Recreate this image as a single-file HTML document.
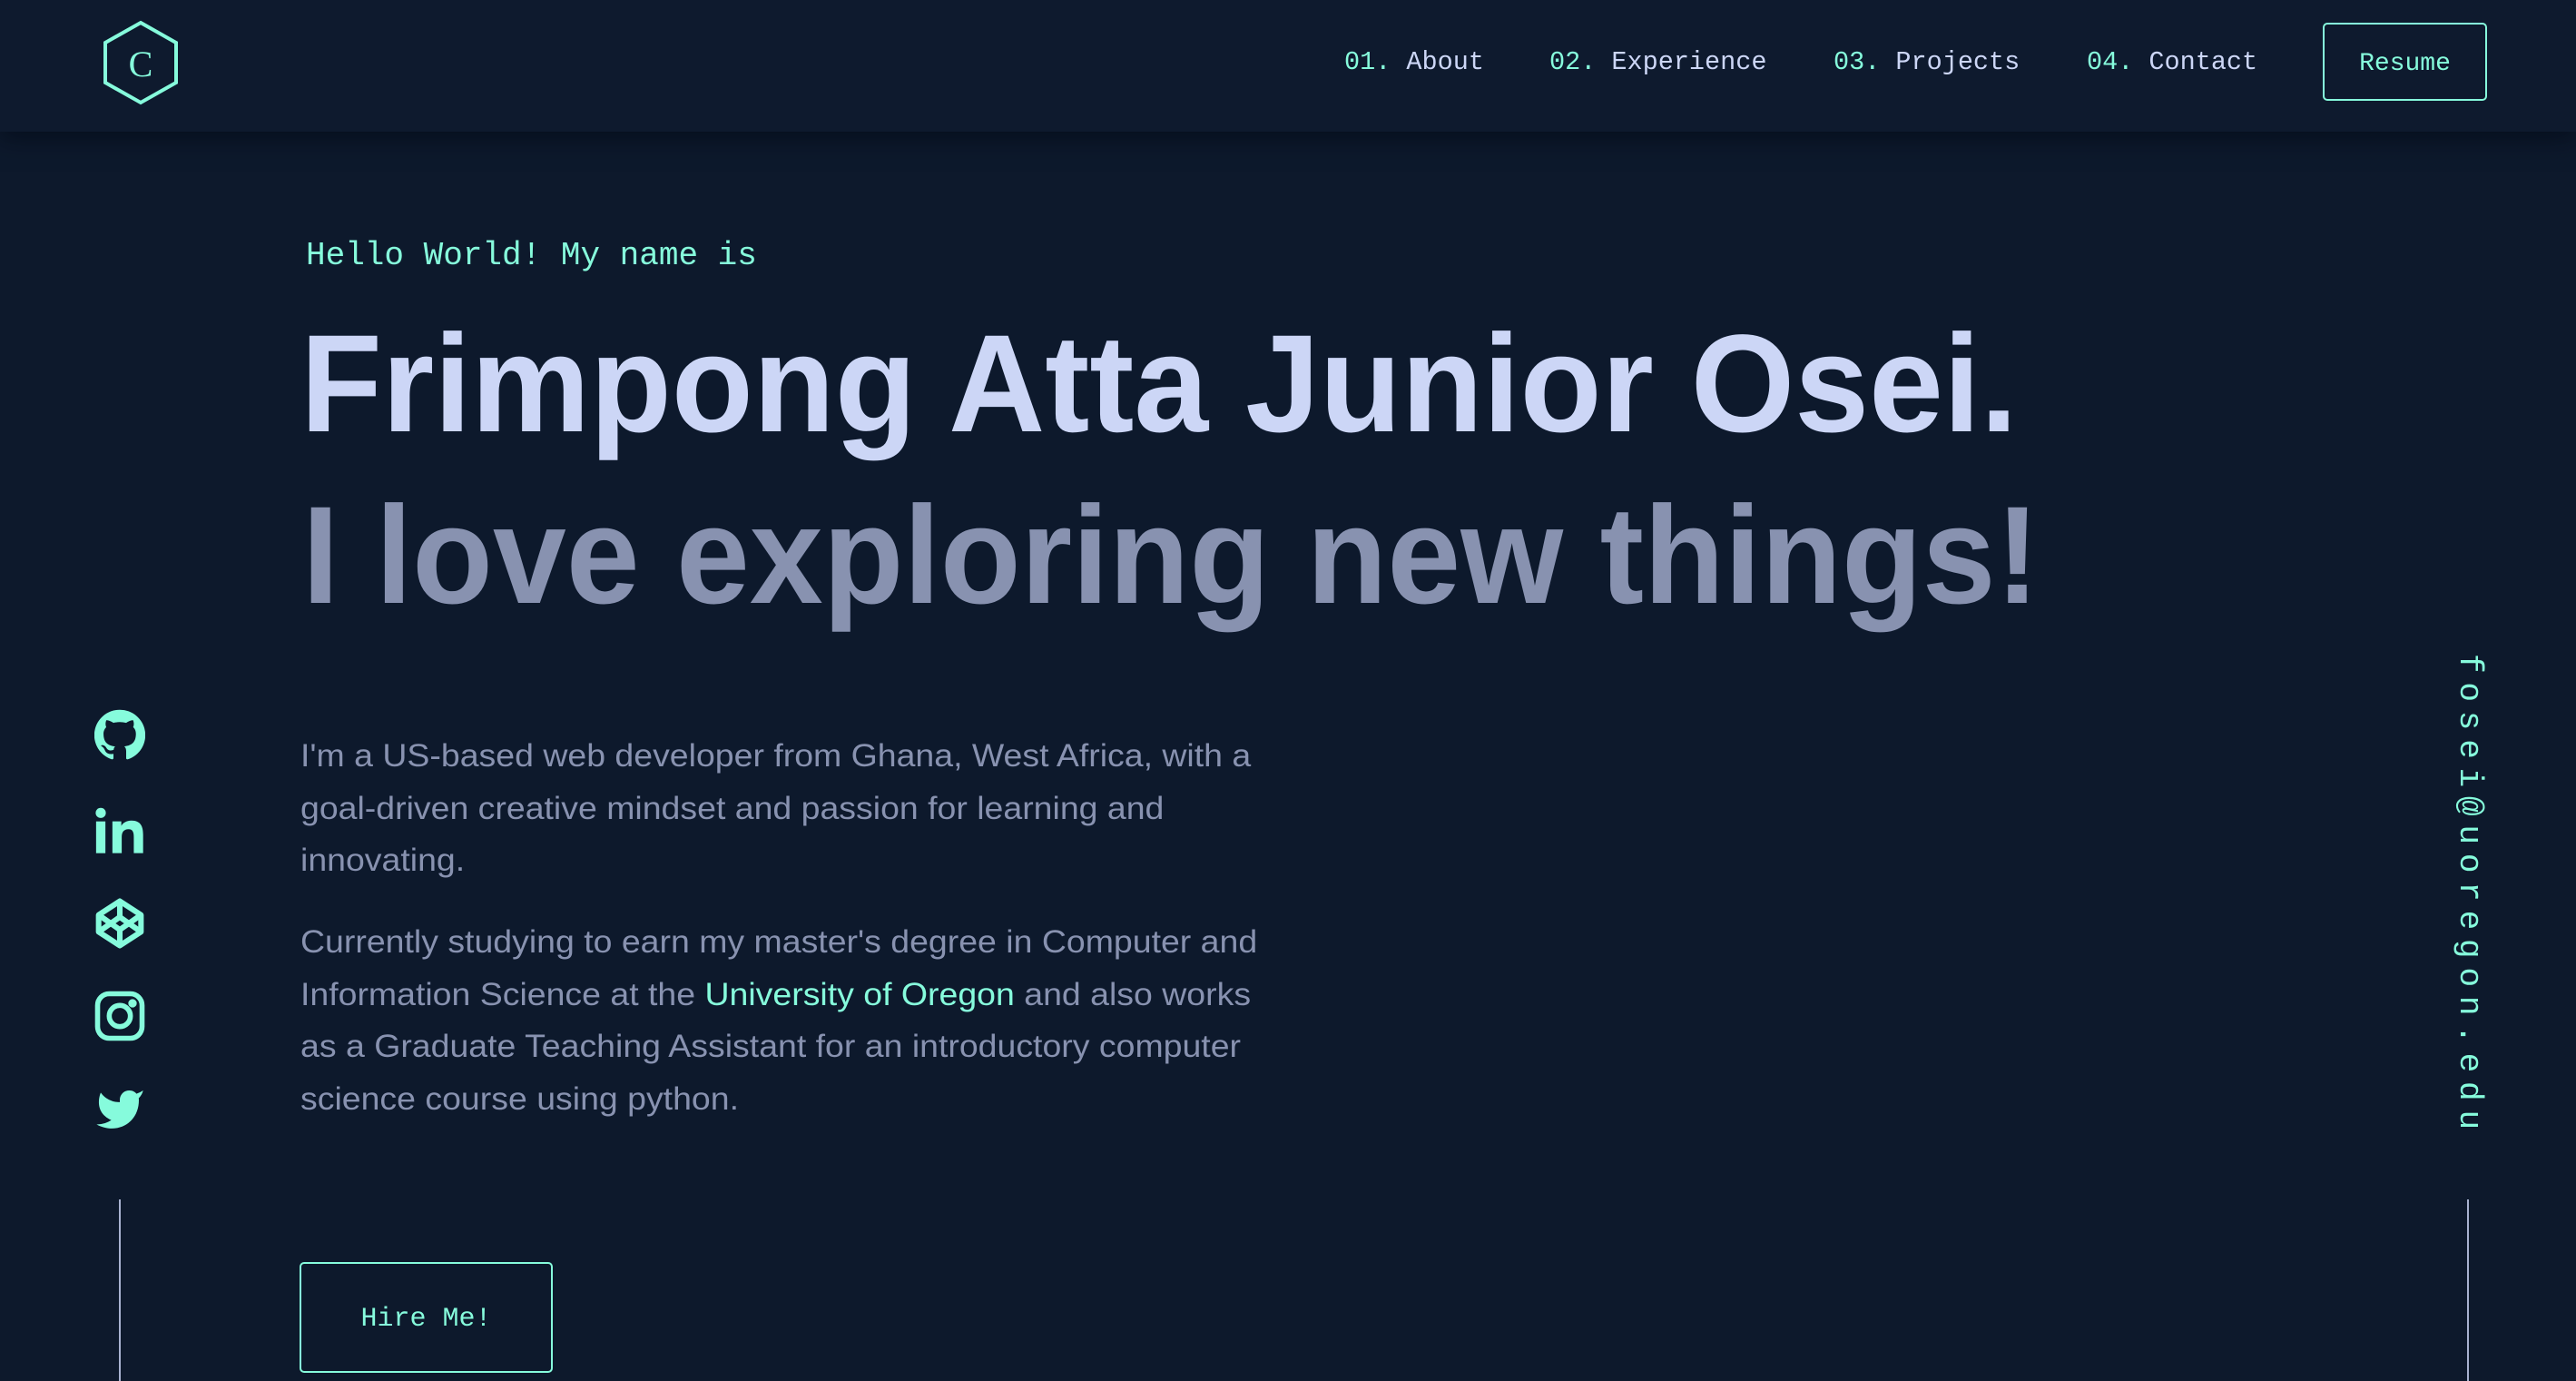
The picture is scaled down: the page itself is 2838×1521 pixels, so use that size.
<!DOCTYPE html>
<html><head><meta charset="utf-8"><style>
*{margin:0;padding:0;box-sizing:border-box}
body{width:2838px;height:1519px;background:#0d192c;overflow:hidden;position:relative;font-family:"Liberation Sans",sans-serif}
.hdr{position:absolute;left:0;top:0;width:2838px;height:145px;background:#0e1a2e;box-shadow:0 8px 24px rgba(2,8,20,.6)}
.mono{font-family:"Liberation Mono",monospace}
.nav{position:absolute;top:55px;font-size:28.5px;line-height:28px;color:#ccd6f6;white-space:nowrap}
.nav span{color:#86fbdc}
.acc{color:#86fbdc}
.abs{position:absolute;white-space:nowrap}
.btn{position:absolute;border:2px solid #86fbdc;border-radius:5px;color:#86fbdc;display:flex;align-items:center;justify-content:center}
.p{position:absolute;left:331px;font-size:35px;line-height:57.5px;color:#8892b0;white-space:nowrap;transform:scaleX(1.07);transform-origin:left}
.ic{position:absolute;left:104px;width:56px;height:56px}
</style></head><body>
<div class="hdr"></div>
<svg class="abs" style="left:112px;top:22px" width="86" height="94" viewBox="0 0 86 94">
<polygon points="43,3 82,25 82,69 43,91 4,69 4,25" fill="none" stroke="#86fbdc" stroke-width="4"/>
<text x="43" y="62" text-anchor="middle" font-family="Liberation Serif,serif" font-size="40" fill="#86fbdc">C</text>
</svg>
<div class="nav mono" style="left:1481px"><span>01.</span> About</div>
<div class="nav mono" style="left:1707px"><span>02.</span> Experience</div>
<div class="nav mono" style="left:2020px"><span>03.</span> Projects</div>
<div class="nav mono" style="left:2299px"><span>04.</span> Contact</div>
<div class="btn mono" style="left:2559px;top:25px;width:181px;height:86px;font-size:28px;padding-top:4px">Resume</div>

<div class="abs mono acc" style="left:337px;top:264px;font-size:36px;line-height:36px">Hello World! My name is</div>
<div class="abs" style="left:331px;top:346px;font-size:153px;line-height:153px;font-weight:bold;color:#ccd6f6;transform:scaleX(.962);transform-origin:left">Frimpong Atta Junior Osei.</div>
<div class="abs" style="left:333px;top:535px;font-size:153px;line-height:153px;font-weight:bold;color:#8892b0;transform:scaleX(.95);transform-origin:left">I love exploring new things!</div>

<div class="p" style="top:804px">I'm a US-based web developer from Ghana, West Africa, with a<br>goal-driven creative mindset and passion for learning and<br>innovating.</div>
<div class="p" style="top:1009px">Currently studying to earn my master's degree in Computer and<br>Information Science at the <span class="acc">University of Oregon</span> and also works<br>as a Graduate Teaching Assistant for an introductory computer<br>science course using python.</div>

<div class="btn mono" style="left:330px;top:1390px;width:279px;height:122px;font-size:30px;padding-top:4px">Hire Me!</div>

<svg class="ic" style="top:781px" viewBox="0 0 24 24"><path fill="#86fbdc" d="M12 .3a12 12 0 0 0-3.8 23.4c.6.1.8-.3.8-.6v-2c-3.3.7-4-1.6-4-1.6-.6-1.4-1.4-1.8-1.4-1.8-1-.7.1-.7.1-.7 1.2 0 1.9 1.2 1.9 1.2 1 1.8 2.8 1.3 3.5 1 0-.8.4-1.3.7-1.6-2.7-.3-5.5-1.300-5.5-6 0-1.2.5-2.3 1.3-3.1-.2-.4-.6-1.6 0-3.2 0 0 1-.3 3.4 1.2a11.5 11.5 0 0 1 6 0c2.3-1.5 3.3-1.2 3.3-1.2.6 1.6.2 2.8 0 3.2.9.8 1.3 1.9 1.3 3.2 0 4.6-2.8 5.6-5.5 5.9.5.4.9 1 .9 2.2v3.3c0 .3.1.7.8.6A12 12 0 0 0 12 .3"/></svg>
<svg class="ic" style="top:886px" viewBox="0 0 24 24"><circle cx="3" cy="4" r="2.4" fill="#86fbdc"/><rect x="0.8" y="8" width="4.4" height="15" fill="#86fbdc"/><path fill="#86fbdc" d="M8.5 8h4.2v2.1c.8-1.4 2.4-2.5 4.8-2.5 4.2 0 5.5 2.6 5.5 6.6V23h-4.4v-7.7c0-2-.4-3.6-2.5-3.6-2.2 0-3.2 1.4-3.2 3.7V23H8.5z"/></svg>
<svg class="ic" style="top:989px" viewBox="0 0 24 24" fill="none" stroke="#86fbdc" stroke-width="2.6" stroke-linejoin="round"><polygon points="12,1.5 22,8 22,16 12,22.5 2,16 2,8"/><polyline points="2,8 12,15 22,8"/><polyline points="2,16 12,9 22,16"/><line x1="12" y1="1.5" x2="12" y2="9"/><line x1="12" y1="15" x2="12" y2="22.5"/></svg>
<svg class="ic" style="top:1091px" viewBox="0 0 24 24" fill="none" stroke="#86fbdc" stroke-width="2.4"><rect x="1.5" y="1.5" width="21" height="21" rx="5.5"/><circle cx="12" cy="12" r="5"/><circle cx="18" cy="6" r="0.8" fill="#86fbdc"/></svg>
<svg class="ic" style="top:1194px" viewBox="0 0 24 24"><path fill="#86fbdc" d="M23 3a10.9 10.9 0 0 1-3.14 1.53 4.48 4.48 0 0 0-7.86 3v1A10.66 10.66 0 0 1 3 4s-4 9 5 13a11.64 11.64 0 0 1-7 2c9 5 20 0 20-11.5a4.5 4.5 0 0 0-.08-.83A7.72 7.72 0 0 0 23 3z"/></svg>
<div class="abs" style="left:131px;top:1321px;width:2px;height:200px;background:#a8b2d1"></div>

<div class="abs mono acc" style="left:2700px;top:720px;font-size:36px;line-height:40px;writing-mode:vertical-rl;letter-spacing:9.8px">fosei@uoregon.edu</div>
<div class="abs" style="left:2718px;top:1321px;width:2px;height:200px;background:#a8b2d1"></div>
</body></html>
